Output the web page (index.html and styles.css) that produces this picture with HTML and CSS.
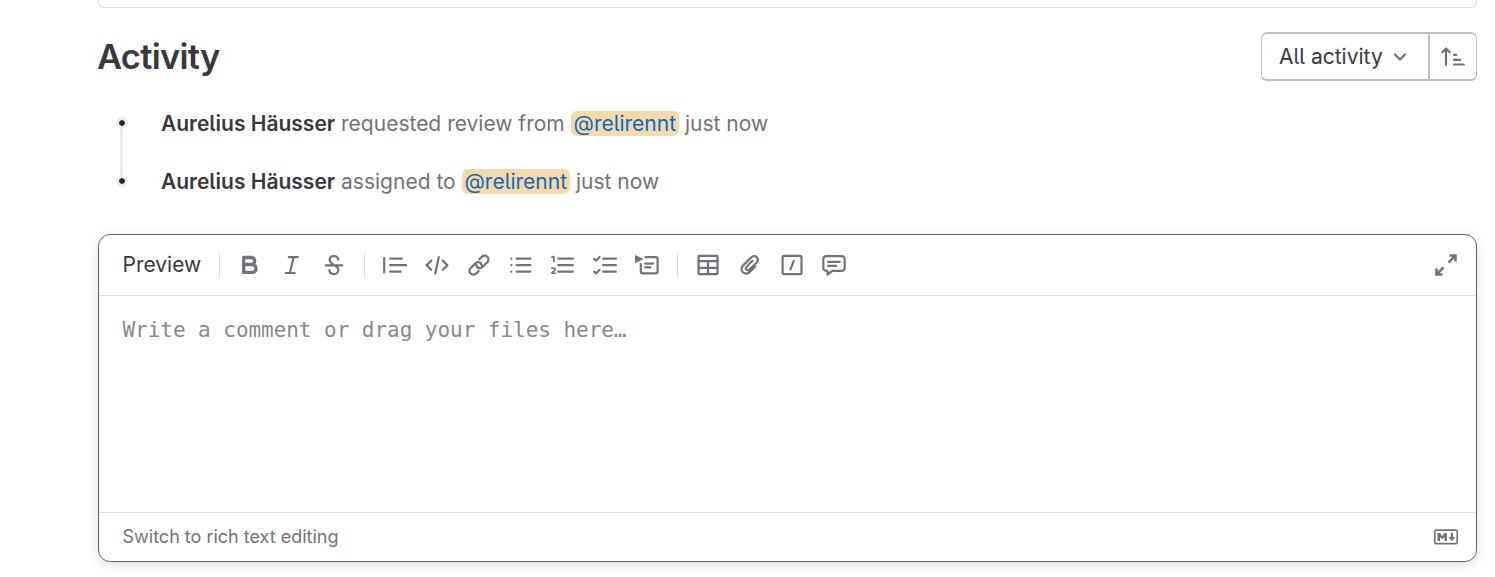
FILE: index.html
```html
<!DOCTYPE html>
<html lang="en">
<head>
<meta charset="utf-8">
<title>Activity</title>
<link rel="stylesheet" href="styles.css">
</head>
<body>
<main class="page">
  <div class="previous-card"></div>
  <header class="activity-header">
    <h2 class="activity-title">Activity</h2>
    <div class="filter-group">
      <button class="filter-button">All activity
        <svg class="chevron" viewBox="0 0 18 18"><path d="M4 6.500 9 11.500l5-5"/></svg>
      </button>
      <button class="sort-button">
        <svg class="icon" viewBox="0 0 24 24"><path d="M5 19.800V3.800M1.300 7.300 5 3.600 8.700 7.300"/><path d="M13 9.800h2.300M13 14.800h6.300M13 19.500h9.700"/></svg>
      </button>
    </div>
  </header>
  <ul class="timeline">
    <li class="event"><span class="dot"></span><span><strong>Aurelius Häusser</strong> requested review from <a class="mention">@relirennt</a> just now</span></li>
    <li class="event"><span class="dot"></span><span><strong>Aurelius Häusser</strong> assigned to <a class="mention">@relirennt</a> just now</span></li>
  </ul>
  <section class="editor">
    <div class="toolbar">
      <span class="preview">Preview</span>
      <span class="divider"></span>
      <div class="tools">
        <svg class="icon" viewBox="0 0 24 24"><path class="bold" d="M5.700 4.500h7.500a3.500 3.500 0 0 1 0 7H5.700m0 0h8.400a3.900 3.900 0 0 1 0 7.900H5.700V4.500"/></svg>
        <svg class="icon" viewBox="0 0 24 24"><path d="M8.800 4.100h9M5.600 20h9M13.700 4.100 9.800 20"/></svg>
        <svg class="icon" viewBox="0 0 24 24"><path d="M16.300 6.600C15.700 4.200 14.200 3 12 3 9.500 3 7.700 4.600 7.700 7c0 2.800 2 3.700 4.300 4.900 2.800 1.300 4.400 2.400 4.400 5 0 2.500-1.900 4.200-4.400 4.200s-4.200-1.500-4.700-3.900M3.700 12.300h16.600"/></svg>
      </div>
      <span class="divider"></span>
      <div class="tools">
        <svg class="icon" viewBox="0 0 24 24"><path d="M1.200 5v14.500M7.200 5.600h11.600M7.200 12.200h16M7.200 18.700h10.500"/></svg>
        <svg class="icon" viewBox="0 0 24 24"><path d="M6.200 7.600 1.600 12.200l4.600 4.600M17.800 7.600l4.600 4.600-4.600 4.600M13.800 4 10.300 20.400"/></svg>
        <svg class="icon" viewBox="0 0 24 24"><path d="M12.300 6.200l2.500-2.500c1.500-1.500 4-1.500 5.500 0s1.500 4 0 5.500l-4.800 4.800c-1.600 1.600-4 1.500-5.300 0-.7-.8-1-1.700-1-2.700M11.700 18l-2.500 2.500c-1.500 1.500-4 1.500-5.500 0s-1.500-4 0-5.500l4.800-4.800c1.600-1.600 4-1.500 5.300 0 .7.800 1 1.700 1 2.700"/></svg>
        <svg class="icon" viewBox="0 0 24 24"><path d="M7.700 5.700h13.700M7.700 12.200h13.700M7.700 18.700h13.700M2.300 5.700h.1M2.300 12.200h.1M2.300 18.700h.1"/></svg>
        <svg class="icon" viewBox="0 0 24 24"><path d="M7.200 5.700h14.600M7.200 12.200h14.600M7.200 18.700h14.600"/><path class="thin" d="M.8 4.200 2.900 3.400V9M.6 15.300h3.300v1.800L.9 19.800v.4H4.600"/></svg>
        <svg class="icon" viewBox="0 0 24 24"><path d="M10.200 5.700h12.700M10.200 12.200h12.700M10.200 18.700h12.700M1.200 5.800 3.200 7.500 6.500 4M1.200 18.600l2 1.700 3.300-3.500"/></svg>
        <svg class="icon" viewBox="0 0 24 24"><path d="M10.500 4.200h10.200q1.900 0 1.900 1.900v12.300q0 1.900-1.900 1.900H7.700q-1.900 0-1.900-1.900v-7.200M10.200 10.600h8M10.200 14.300h5.300"/><path class="solid" d="M0 2v8.200L8.500 6z"/></svg>
      </div>
      <span class="divider"></span>
      <div class="tools">
        <svg class="icon" viewBox="0 0 24 24"><rect x="2.600" y="2.900" width="18.900" height="18.300" rx="1.200"/><path d="M2.600 8.200h18.900M2.600 14.800h18.900M12 8.200v13"/></svg>
        <svg class="icon" viewBox="0 0 24 24"><path d="m14.500 7.800-5.900 5.900c-.9.9-.9 2.200-.1 3s2.100.8 3-.1l6.900-6.900c1.900-1.900 1.900-4 .4-5.500s-3.900-1.500-5.600.2l-8 8c-2.100 2.100-2.100 5.100-.3 6.900s4.800 1.800 6.900-.3l5.500-5.500"/></svg>
        <svg class="icon" viewBox="0 0 24 24"><rect x="2.600" y="2.900" width="18.900" height="18.300" rx="1.400"/><path d="M13.700 7.900 10.500 16.400"/></svg>
        <svg class="icon" viewBox="0 0 24 24"><path d="M4 3.200h16a2.700 2.700 0 0 1 2.700 2.700v9.200a2.700 2.700 0 0 1-2.700 2.700h-9.500l-5 3.700v-3.700H4a2.700 2.700 0 0 1-2.700-2.700V5.900A2.700 2.700 0 0 1 4 3.200z"/><path d="M6.200 8.800h11.600M6.200 12.800h8"/></svg>
      </div>
      <svg class="icon expand" viewBox="0 0 24 24"><path d="M14.500 9.500 21.300 2.700M15.500 2.500h6v6M9.500 14.500 2.700 21.300M8.500 21.500h-6v-6"/></svg>
    </div>
    <div class="comment">Write a comment or drag your files here…</div>
    <footer class="editor-footer">
      <span>Switch to rich text editing</span>
      <svg class="icon" viewBox="0 0 24 24"><rect class="thin" x=".8" y="5.100" width="22.400" height="13.500" rx="1"/><path class="solid" d="M3.500 16V8h2.300l2.400 3 2.400-3h2.300v8h-2.500v-4.100L8.200 14.600 6 11.900V16z"/><path d="M17.900 8.500v6"/><path class="solid" d="M14.300 12h7.200l-3.600 4.300z"/></svg>
    </footer>
  </section>
</main>
</body>
</html>
```
FILE: styles.css
```css
* { box-sizing: border-box; }
body {
  margin: 0;
  background: #fff;
  color: #3a383f;
  font: 21px/30px Inter, "Noto Sans", sans-serif;
  font-feature-settings: "cv05" 1;
  height: 577px;
  overflow: hidden;
}
.page { padding: 0 18px 0 98px; }
.previous-card {
  height: 8px;
  border: 1px solid #dcdcde;
  border-top: 0;
  border-radius: 0 0 6px 6px;
}
.activity-header {
  display: flex;
  justify-content: space-between;
  align-items: center;
  height: 49px;
  margin-top: 24px;
}
.activity-title { margin: 0 0 0 -1px; font-size: 34.5px; font-weight: 600; letter-spacing: -.72px; }
.filter-group {
  display: flex;
  width: 216px;
  height: 49px;
  border: 1.5px solid #bfbfc3;
  border-width: 2px 1.5px;
  border-radius: 6px;
}
button { font: inherit; font-feature-settings: inherit; color: inherit; background: none; border: 0; padding: 0; display: flex; align-items: center; }
.filter-button { width: 168px; padding-left: 17px; gap: 8px; border-right: 2px solid #bfbfc3; }
.sort-button { flex: 1; justify-content: center; }
.icon { width: 24px; height: 24px; flex: none; }
.chevron { width: 18px; height: 18px; }
svg { fill: none; stroke: #737278; stroke-width: 2.2; stroke-linecap: round; stroke-linejoin: round; }
.bold { stroke-width: 3.3; stroke-linejoin: miter; }
.thin { stroke-width: 1.6; }
.solid { fill: #737278; stroke: none; }
.expand { stroke-width: 2.6; stroke-linecap: butt; stroke-linejoin: miter; margin-left: auto; }
.timeline {
  list-style: none;
  margin: 28px 0 0;
  padding: 0 0 0 18px;
  display: grid;
  gap: 28px;
  background: linear-gradient(#ececef, #ececef) 22px 14px / 3px 58px no-repeat;
}
.event { display: flex; align-items: center; height: 30px; color: #737278; white-space: nowrap; }
.event strong { color: #3a383f; font-weight: 600; }
.dot { width: 12px; height: 12px; margin: -3px 32.9px 0 0; border-radius: 50%; border: 3px solid #ececef; background: #28272d; background-clip: padding-box; flex: none; }
.mention { color: #1068bf; background: #f5d9a8; border-radius: 6px; padding: 0 3px; }
.editor {
  display: flex;
  flex-direction: column;
  height: 328px;
  margin-top: 37px;
  border: 1px solid #626168;
  border-radius: 12px;
  box-shadow: 0 3px 12px rgba(0, 0, 0, .13);
}
.toolbar { display: flex; align-items: center; height: 61px; padding: 0 18px 0 23.5px; border-bottom: 1px solid #dcdcde; }
.preview { width: 96.5px; }
.divider { width: 1px; height: 24px; background: #dcdcde; }
.tools { display: flex; gap: 18px; padding: 0 18px; }
.comment { flex: 1; padding: 19px 23.5px; color: #89888d; font-family: "DejaVu Sans Mono", monospace; letter-spacing: -.045px; font-feature-settings: normal; }
.editor-footer { display: flex; align-items: center; justify-content: space-between; height: 49px; padding: 0 18px 0 23.5px; border-top: 1px solid #dcdcde; font-size: 18px; color: #737278; }
```
